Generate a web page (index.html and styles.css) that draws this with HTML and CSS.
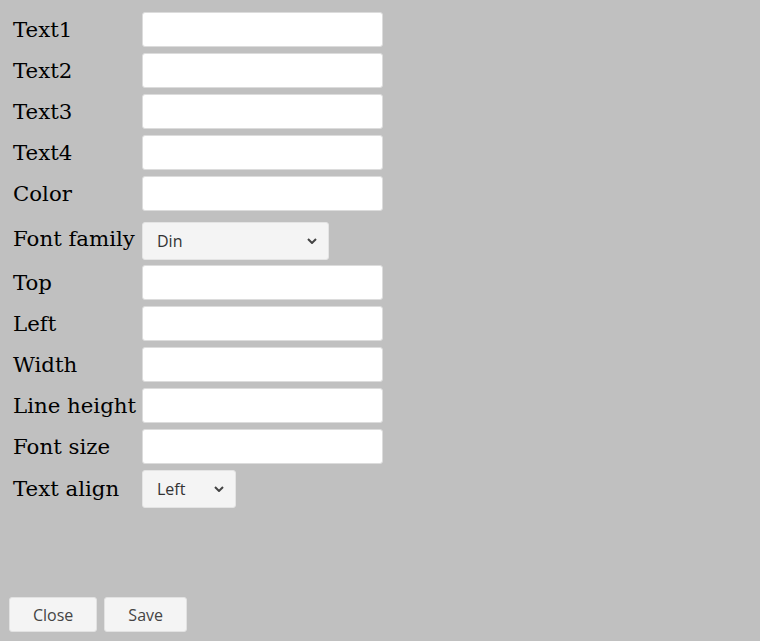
FILE: index.html
```html
<!DOCTYPE html>
<html lang="en">
<head>
  <meta charset="UTF-8" />
  <title>Text settings</title>
  <link rel="stylesheet" href="styles.css">
</head>
<body>
  <form class="settings">
    <div class="row"><label>Text1</label><input type="text" class="field"></div>
    <div class="row"><label>Text2</label><input type="text" class="field"></div>
    <div class="row"><label>Text3</label><input type="text" class="field"></div>
    <div class="row"><label>Text4</label><input type="text" class="field"></div>
    <div class="row"><label>Color</label><input type="text" class="field"></div>
    <div class="row row-select">
      <label>Font family</label>
      <div class="select-wrap picker-wide">
        <select class="picker">
          <option>Din</option>
          <option>Arial</option>
          <option>Times</option>
        </select>
        <svg class="chevron" width="10" height="6" viewBox="0 0 10 6"><path d="M1 1 L5 5 L9 1" fill="none" stroke="#444" stroke-width="2"/></svg>
      </div>
    </div>
    <div class="row"><label>Top</label><input type="text" class="field"></div>
    <div class="row"><label>Left</label><input type="text" class="field"></div>
    <div class="row"><label>Width</label><input type="text" class="field"></div>
    <div class="row"><label>Line height</label><input type="text" class="field"></div>
    <div class="row"><label>Font size</label><input type="text" class="field"></div>
    <div class="row row-align">
      <label>Text align</label>
      <div class="select-wrap picker-narrow">
        <select class="picker">
          <option>Left</option>
          <option>Center</option>
          <option>Right</option>
        </select>
        <svg class="chevron" width="10" height="6" viewBox="0 0 10 6"><path d="M1 1 L5 5 L9 1" fill="none" stroke="#444" stroke-width="2"/></svg>
      </div>
    </div>
  </form>

  <div class="actions">
    <button type="button" class="btn">Close</button>
    <button type="button" class="btn">Save</button>
  </div>
</body>
</html>
```

FILE: styles.css
```css
body {
  margin: 0;
  min-height: 100vh;
  display: flex;
  flex-direction: column;
  background-color: #c0c0c0;
  font-family: "DejaVu Serif", serif;
  box-sizing: border-box;
}
.settings {
  padding: 9px 0 0 13px;
}
.row {
  display: flex;
  align-items: center;
  height: 41px;
}
.row label {
  width: 129px;
  font-size: 21.3px;
  color: #000;
}
.field {
  box-sizing: border-box;
  width: 241px;
  height: 35px;
  margin: 0;
  border: 1px solid #dcdcdc;
  border-radius: 3px;
  background: #fff;
}
.row-select {
  height: 48px;
}
.row-select .select-wrap {
  margin-top: 6px;
}
.row-align {
  height: 43px;
}
.select-wrap {
  position: relative;
  height: 38px;
}
.picker-wide { width: 187px; }
.picker-narrow { width: 94px; }
.picker {
  -webkit-appearance: none;
  appearance: none;
  box-sizing: border-box;
  width: 100%;
  height: 38px;
  margin: 0;
  padding: 0 30px 0 14px;
  border: 1px solid #e4e4e4;
  border-radius: 3px;
  background-color: #f4f4f4;
  color: #333;
  font-family: "Open Sans", sans-serif;
  font-size: 16px;
}
.chevron {
  position: absolute;
  right: 12px;
  top: 16px;
  pointer-events: none;
}
.actions {
  margin-top: auto;
  display: flex;
  gap: 7px;
  padding: 0 0 9px 9px;
}
.btn {
  box-sizing: border-box;
  height: 35px;
  padding: 0 23px;
  border: 1px solid #e2e2e2;
  border-radius: 3px;
  background-color: #f4f4f4;
  color: #444;
  font-family: "Open Sans", sans-serif;
  font-size: 16px;
  cursor: pointer;
}
```
